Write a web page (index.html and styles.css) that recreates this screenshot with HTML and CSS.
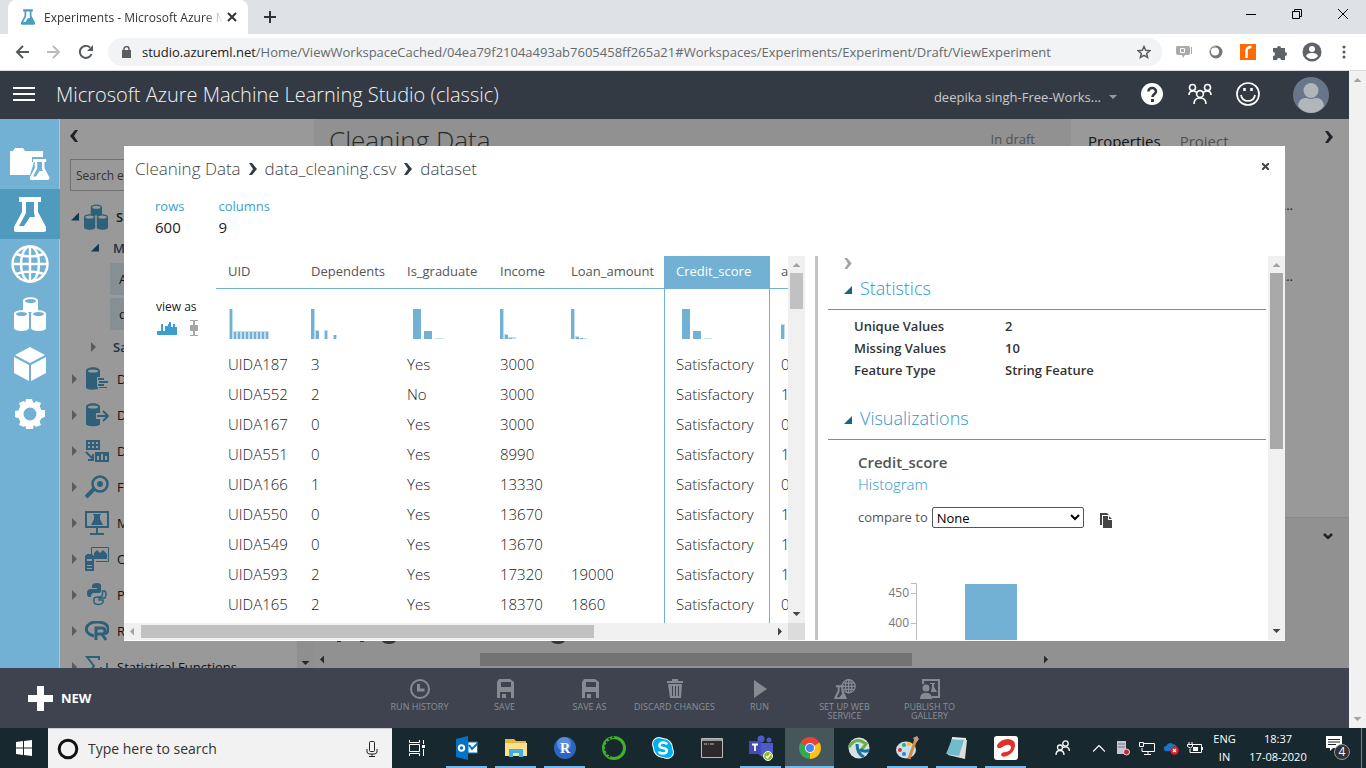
FILE: index.html
```html
<!DOCTYPE html>
<html lang="en">
<head>
<meta charset="utf-8">
<title>Experiments - Microsoft Azure Machine Learning Studio</title>
<link rel="stylesheet" href="styles.css">
</head>
<body>
<svg class="defs" aria-hidden="true">
  <symbol id="flask" viewBox="0 0 32 35"><path fill-rule="evenodd" d="M5 0h22v5h-3v10l8 15c1 3 0 5-3 5H3c-3 0-4-2-3-5l8-15V5H5zM12 5v11L5 29h5l6-9h5l-1-4V5z"/></symbol>
  <symbol id="cylinders" viewBox="0 0 32 34"><path d="M9 4c0-5 15-5 15 0v11H9zM0 17c0-5 15-5 15 0v14c0 4-15 4-15 0zM17 17c0-5 15-5 15 0v14c0 4-15 4-15 0z"/><g class="cut"><ellipse cx="16.500" cy="4" rx="5.500" ry="2"/><ellipse cx="7.500" cy="17" rx="5.500" ry="2"/><ellipse cx="24.500" cy="17" rx="5.500" ry="2"/></g></symbol>
  <symbol id="chev" viewBox="0 0 8 12"><path d="M0 0h3l5 6-5 6H0l4-6z"/></symbol>
  <symbol id="floppy" viewBox="0 0 18 20"><path fill-rule="evenodd" d="M3 0h11l4 3v16h-3v-6H4v6H1V3zM5 3v5h10V3zM6 15h4v4H6z"/></symbol>
</svg>

<header class="browser">
  <div class="tabstrip">
    <div class="tab">
      <svg class="fav" width="14" height="16"><use href="#flask"/></svg>
      <span class="tab-title">Experiments - Microsoft Azure Machine</span>
      <button class="plain" aria-label="Close tab"><svg width="10" height="10" viewBox="0 0 10 10"><path d="M1 1l8 8M9 1L1 9" stroke="#333" stroke-width="2"/></svg></button>
    </div>
    <button class="plain newtab" aria-label="New tab"><svg width="12" height="12" viewBox="0 0 12 12"><path d="M6 0v12M0 6h12" stroke="#333" stroke-width="2"/></svg></button>
    <div class="winctl">
      <button class="plain" aria-label="Minimize"><svg width="10" height="10" viewBox="0 0 10 10"><path d="M0 5.500h10" stroke="#000"/></svg></button>
      <button class="plain" aria-label="Restore"><svg width="10" height="10" viewBox="0 0 10 10" fill="none" stroke="#000"><path d="M.5 2.500h7v7h-7zM2.500 2.500v-2h7v7h-2"/></svg></button>
      <button class="plain" aria-label="Close"><svg width="10" height="10" viewBox="0 0 10 10"><path d="M0 0l10 10M10 0L0 10" stroke="#000"/></svg></button>
    </div>
  </div>
  <div class="toolbar">
    <button class="plain" aria-label="Back"><svg width="14" height="14" viewBox="0 0 14 14" fill="none" stroke="#555a5f" stroke-width="2"><path d="M14 7H2M8 1L2 7l6 6"/></svg></button>
    <button class="plain" aria-label="Forward"><svg width="14" height="14" viewBox="0 0 14 14" fill="none" stroke="#bbb" stroke-width="2"><path d="M0 7h12M6 1l6 6-6 6"/></svg></button>
    <button class="plain" aria-label="Reload"><svg width="14" height="14" viewBox="0 0 14 14"><path d="M12.500 9A6 6 0 1 1 11 2.500" fill="none" stroke="#555a5f" stroke-width="2"/><path d="M14 0v6H8z" fill="#555a5f"/></svg></button>
    <div class="omnibox">
      <svg width="9" height="12" viewBox="0 0 9 12"><path d="M0 4h9v8H0z" fill="#5a5e62"/><path d="M2 5V3a2.500 2.500 0 0 1 5 0v2" fill="none" stroke="#5a5e62" stroke-width="1.500"/></svg>
      <span class="url"><b>studio.azureml.net</b>/Home/ViewWorkspaceCached/04ea79f2104a493ab7605458ff265a21#Workspaces/Experiments/Experiment/Draft/ViewExperiment</span>
      <svg width="14" height="14" viewBox="0 0 14 14" fill="none" stroke="#5a5e62" stroke-width="1.500"><path d="M7 1.500l1.700 3.800 4.100.4-3.100 2.700.9 4.100L7 10.400l-3.600 2.100.9-4.100L1.200 5.700l4.100-.4z"/></svg>
    </div>
    <div class="exts">
      <button class="plain" aria-label="Capture"><svg width="16" height="14" viewBox="0 0 16 14"><path d="M1 1h11q2 0 2 2v5q0 2-2 2H9l-2 3-1-3H2q-2 0-2-2V3q0-2 1-2zM15 2h1v7h-1z" fill="#aaa"/><path d="M4.500 3.500h4v4h-4z" fill="none" stroke="#fff"/></svg></button>
      <button class="plain" aria-label="Ring"><svg width="14" height="14" viewBox="0 0 14 14"><circle cx="7" cy="7" r="6.500" fill="#777"/><circle cx="6" cy="6.500" r="4" fill="#fff"/><path d="M1 6a6 6 0 0 1 6-5" stroke="#bbb" fill="none"/></svg></button>
      <button class="plain" aria-label="Orange extension"><svg width="16" height="16" viewBox="0 0 16 16"><path d="M0 0h16v16H0z" fill="#ff6a00"/><path d="M6.500 14V7q0-4 5-4" fill="none" stroke="#fff" stroke-width="2.500"/></svg></button>
      <button class="plain" aria-label="Extensions"><svg width="16" height="16" viewBox="0 0 16 16"><path d="M1 4h4a2 2 0 1 1 4 0h4v4a2 2 0 1 1 0 4v4H9a2 2 0 0 0-4 0H1v-4a2 2 0 0 0 0-4z" fill="#5f6368"/></svg></button>
      <button class="plain" aria-label="Profile"><svg width="20" height="20" viewBox="0 0 20 20"><circle cx="10" cy="10" r="9.500" fill="#5f6368"/><circle cx="10" cy="7" r="3" fill="#fff"/><path d="M4 14q1-3 6-3t6 3q-2 3-6 3t-6-3" fill="#fff"/></svg></button>
      <button class="plain" aria-label="Menu"><svg width="4" height="14" viewBox="0 0 4 14" fill="#555"><circle cx="2" cy="2" r="1.500"/><circle cx="2" cy="7" r="1.500"/><circle cx="2" cy="12" r="1.500"/></svg></button>
    </div>
  </div>
</header>

<div class="viewport">
<div class="app">
  <header class="apphead">
    <button class="plain burger" aria-label="Menu"><svg width="22" height="14" viewBox="0 0 22 14"><path d="M0 1h22M0 7h22M0 13h22" stroke="#fff" stroke-width="2"/></svg></button>
    <h1>Microsoft Azure Machine Learning Studio (classic)</h1>
    <button class="plain user">deepika singh-Free-Works...<svg width="8" height="4" viewBox="0 0 8 4"><path d="M0 0h8L4 4z" fill="#999"/></svg></button>
    <button class="plain hicon" aria-label="Help"><svg width="22" height="22" viewBox="0 0 22 22"><circle cx="11" cy="11" r="11" fill="#fff"/><path d="M7.500 8.500c0-5 7.500-4.500 7.500 0 0 2.500-3.500 2.500-3.500 5.500" fill="none" stroke="#343a43" stroke-width="2.600"/><path d="M10 16h3v3h-3z" fill="#343a43"/></svg></button>
    <button class="plain hicon" aria-label="Community"><svg width="24" height="22" viewBox="0 0 24 22" fill="none" stroke="#fff" stroke-width="1.600"><circle cx="4.500" cy="4.500" r="3"/><circle cx="19.500" cy="4.500" r="3"/><circle cx="12" cy="11" r="3.400"/><path d="M1 12q0-4 4-4 3 0 4 2M23 12q0-4-4-4-3 0-4 2M6 21q0-6 6-6t6 6"/></svg></button>
    <button class="plain hicon" aria-label="Feedback"><svg width="24" height="24" viewBox="0 0 24 24" fill="none" stroke="#fff" stroke-width="1.700"><circle cx="12" cy="12" r="11"/><path d="M5 13q1 6 7 6t7-6"/><path d="M8.500 6v3M15.500 6v3" stroke-width="2.500"/></svg></button>
    <button class="plain avatar" aria-label="Account"><svg width="36" height="36" viewBox="0 0 36 36"><circle cx="18" cy="18" r="18" fill="#687689"/><circle cx="18" cy="13.500" r="7.500" fill="#b0b6bb"/><path d="M5 29q1-9 9-8 4 2 8 0 8-1 9 8-5 7-13 7T5 29" fill="#b0b6bb"/></svg></button>
  </header>

  <div class="work">
    <nav class="rail">
      <a href="#projects" aria-label="Projects"><svg width="40" height="32" viewBox="0 0 40 32"><path d="M0 3h3l2-3h8l2 3h18v6H22v5h2l-4 13H0z"/><g transform="translate(20 11) scale(.6)"><path fill-rule="evenodd" d="M5 0h22v5h-3v10l8 15c1 3 0 5-3 5H3c-3 0-4-2-3-5l8-15V5H5zM12 5v11L5 29h5l6-9h5l-1-4V5z"/></g></svg></a>
      <a href="#experiments" class="on" aria-label="Experiments"><svg width="32" height="35"><use href="#flask"/></svg></a>
      <a href="#web" aria-label="Web services"><svg width="38" height="38" viewBox="0 0 38 38" fill="none" stroke="#fff" stroke-width="2.400"><circle cx="19" cy="19" r="17.500"/><ellipse cx="19" cy="19" rx="9" ry="17.500"/><path d="M19 1v36M1 19h36M5 9q14 5 28 0M5 29q14-5 28 0"/></svg></a>
      <a href="#datasets" aria-label="Datasets"><svg width="32" height="34"><use href="#cylinders"/></svg></a>
      <a href="#models" aria-label="Models"><svg width="32" height="34" viewBox="0 0 32 34"><path d="M16 0l15 8-15 8L1 8zM0 10l15 8v16L0 26zM32 10l-15 8v16l15-8z"/></svg></a>
      <a href="#settings" aria-label="Settings"><svg width="30" height="30" viewBox="0 0 30 30"><g fill="#fff"><circle cx="15" cy="15" r="12"/><path d="M11 0h6l2 6h-9zM11 30h7l1-6h-9zM0 12v6l6 2v-9zM30 11v7l-6 2v-9zM4 4l5-2 4 5-6 5zM26 4l-5-2-4 5 6 5zM4 26l5 2 4-5-6-5zM26 26l-5 2-4-5 6-5z"/></g><circle cx="15" cy="15" r="6.500" fill="#72b1d3"/></svg></a>
    </nav>

    <div class="stage">
      <aside class="palette">
        <button class="plain fold" aria-label="Collapse"><svg width="8" height="12" class="flip"><use href="#chev"/></svg></button>
        <input class="search" type="search" aria-label="Search experiment items" placeholder="Search experiment items">
        <ul class="tree">
          <li class="open"><i class="tri"></i><svg width="24" height="26"><use href="#cylinders"/></svg>Saved Datasets</li>
          <li class="open sub"><i class="tri"></i>My Datasets</li>
          <li class="leaf">Airline Data</li>
          <li class="leaf">data_cleaning.csv</li>
          <li class="sub samples"><i class="tri"></i>Samples</li>
          <li><i class="tri"></i><svg width="24" height="24" viewBox="0 0 24 24"><path d="M1 4c0-5 14-5 14 0v6h-3v10h1v2q-12 2-12-2zM13 11h6v2h-6zM14 14h9v2h-9zM13 17h6v2h-6zM14 20h8v1h-8z"/><ellipse class="cut" cx="8" cy="4" rx="5" ry="1.500"/></svg>Data Format Conversions</li>
          <li><i class="tri"></i><svg width="24" height="24" viewBox="0 0 24 24"><path d="M1 4c0-5 14-5 14 0v6h-4v6h4v5c0 3-14 3-14 0z"/><ellipse class="cut" cx="8" cy="4" rx="5" ry="1.500"/><path d="M12 13h10M18 8l5 5-5 5" fill="none" stroke="#4da0ca" stroke-width="2"/></svg>Data Input and Output</li>
          <li><i class="tri"></i><svg width="24" height="24" viewBox="0 0 24 24"><path fill-rule="evenodd" d="M1 1h14v10H1zM3 3v2h2V3zM7 3v2h2V3zM11 3v2h2V3zM3 7v2h2V7zM7 7v2h2V7zM11 7v2h2V7zM10 13h14v10H10zM12 17v4h2v-4zM16 15v6h2v-6zM20 17v4h2v-4z"/><path d="M1 13l7 7M8 15v6H3" fill="none" stroke="#4da0ca" stroke-width="2"/></svg>Data Transformation</li>
          <li><i class="tri"></i><svg width="24" height="24" viewBox="0 0 24 24"><circle cx="15" cy="9" r="7.500" fill="none" stroke="#4da0ca" stroke-width="2.600"/><circle cx="15" cy="9" r="3"/><path d="M9 14L1 22" stroke="#4da0ca" stroke-width="4"/></svg>Feature Selection</li>
          <li><i class="tri"></i><svg width="24" height="24" viewBox="0 0 24 24"><path d="M1 1h22v15H1zM12 16v6M5 23h14" fill="none" stroke="#4da0ca" stroke-width="2"/><path d="M8 3h8v1h-1v4l3 6H6l3-6V4H8z"/></svg>Machine Learning</li>
          <li><i class="tri"></i><svg width="24" height="24" viewBox="0 0 24 24"><path d="M6.500 7V.5h17v14H11" fill="none" stroke="#4da0ca"/><path d="M9 12V6l3-3 3 3 3-3 4 4v5zM0 9l2-2h5l2 2v15H0zM2 12v2h5v-2zM2 18v1h5v-1zM2 21v1h5v-1z" fill-rule="evenodd"/></svg>OpenCV Library Modules</li>
          <li><i class="tri"></i><svg width="24" height="24" viewBox="0 0 24 24"><path d="M7 3q0-3 5-3t4 4v4q0 2-3 2H9q-3 0-3 4H4q-2 0-2-4t4-4h6V5H7z"/><path d="M17.500 8H20q2 3 0 7h-6v2h4q1 4-4 4.500-5 0-5-2.500v-3q0-2 4-2h3q2-1 1.500-6z" fill="none" stroke="#4da0ca" stroke-width="1.500"/></svg>Python Language Modules</li>
          <li><i class="tri"></i><svg width="24" height="20" viewBox="0 0 24 20"><path d="M9 15C-3 12 0 1 12 1s14 9 8 12" fill="none" stroke="#4da0ca" stroke-width="3"/><path d="M11 19V7h6q3 0 3 3t-3 3l4 6M11 13h6" fill="none" stroke="#4da0ca" stroke-width="3"/></svg>R Language Modules</li>
          <li><i class="tri"></i><svg width="24" height="24" viewBox="0 0 24 24"><path d="M14 5V2H2l7 9-7 9h12M16 12v8M22 8v12" fill="none" stroke="#4da0ca" stroke-width="2"/></svg>Statistical Functions</li>
        </ul>
        <div class="sideline"><i class="arr down dark"></i></div>
      </aside>
      <main class="canvas">
        <div class="canvas-head"><h2>Cleaning Data</h2><span>In draft</span></div>
        <svg class="hint" width="240" height="4" viewBox="0 0 240 4" fill="#555"><path d="M3 0h4v1H3zM26 0h4v1h-4zM48 0h14q-2 3-7 3t-7-3zM217 0h14q-2 3-7 3t-7-3z"/></svg>
        <div class="hbar"><i class="arr left dark"></i><i class="thumb"></i><i class="arr right dark"></i></div>
      </main>
      <aside class="props">
        <div class="ptabs"><b>Properties</b><span>Project</span><button class="plain" aria-label="Expand"><svg width="8" height="12"><use href="#chev"/></svg></button></div>
        <p>...</p><p>...</p>
        <div class="quick"><svg width="10" height="6" viewBox="0 0 10 6"><path d="M1 1l4 4 4-4" fill="none" stroke="#343a43" stroke-width="2.500"/></svg></div>
      </aside>
      <div class="shade"></div>

      <section class="modal" role="dialog" aria-label="dataset">
        <div class="crumbs">
          <a href="#exp">Cleaning Data</a><svg width="8" height="12"><use href="#chev"/></svg><a href="#csv">data_cleaning.csv</a><svg width="8" height="12"><use href="#chev"/></svg><span>dataset</span>
          <button class="plain" aria-label="Close"><svg width="7" height="7" viewBox="0 0 7 7"><path d="M0 0l7 7M7 0L0 7" stroke="#444" stroke-width="2"/></svg></button>
        </div>
        <dl class="counts"><div><dt>rows</dt><dd>600</dd></div><div><dt>columns</dt><dd>9</dd></div></dl>
        <div class="split">
          <div class="gridpane">
            <div class="viewas">view as
              <div><button class="plain" aria-label="Histogram"><svg width="20" height="13" viewBox="0 0 20 13"><path d="M0 13V9h4V2h2v7h2V4h3V2h1V0h2v5h2V2h2v3h2v8z" fill="#3c9fcd"/></svg></button><button class="plain" aria-label="Box plot"><svg width="8" height="16" viewBox="0 0 8 16"><path d="M0 0h8v1H5v4h3v6H5v4h3v1H0v-1h3v-4H0V5h3V1H0z" fill="#a6a6a6"/></svg></button></div>
            </div>
            <div class="tablewrap">
              <table>
                <colgroup><col class="w1"><col class="w2"><col class="w3"><col class="w4"><col class="w5"><col class="w6"><col class="w7"></colgroup>
                <thead>
                  <tr><th>UID</th><th>Dependents</th><th>Is_graduate</th><th>Income</th><th>Loan_amount</th><th class="sel">Credit_score</th><th>approval</th></tr>
                </thead>
                <tbody>
                  <tr class="mini">
                    <td><svg width="48" height="30"><path class="lt" d="M1 0h4v22h36v8H1z"/><path d="M2 0h2v30H2zM6 23h2v7H6zM10 23h2v7h-2zM14 23h2v7h-2zM18 23h2v7h-2zM22 23h2v7h-2zM26 23h2v7h-2zM30 23h2v7h-2zM34 23h2v7h-2zM38 23h2v7h-2z"/></svg></td>
                    <td><svg width="48" height="30"><path class="lt" d="M0 0h4v21h4v9H0zM13 21h4v9h-4zM22 26h4v4h-4z"/><path d="M0 0h3v30H0zM5 22h3v8H5zM14 22h2v8h-2zM23 26h2v4h-2z"/></svg></td>
                    <td><svg width="48" height="30"><path class="lt" d="M28 29h8v1h-8z"/><path d="M6 0h8v30H6zM17 22h8v8h-8z"/></svg></td>
                    <td><svg width="48" height="30"><path class="lt" d="M0 0h4v25h4v3h8v2H0z"/><path d="M0 0h3v30H0zM5 26h3v4H5zM9 29h3v1H9z"/></svg></td>
                    <td><svg width="48" height="30"><path class="lt" d="M0 0h4v27h4v2h8v1H0z"/><path d="M0 0h3v30H0zM5 28h3v2H5zM9 29h3v1H9z"/></svg></td>
                    <td class="sel"><svg width="48" height="30"><path class="lt" d="M28 29h8v1h-8z"/><path d="M6 0h8v30H6zM17 22h8v8h-8z"/></svg></td>
                    <td><svg width="8" height="30"><path class="lt" d="M0 15h4v15H0z"/><path d="M0 16h3v14H0z"/></svg></td>
                  </tr>
                  <tr><td>UIDA187</td><td>3</td><td>Yes</td><td>3000</td><td></td><td class="sel">Satisfactory</td><td>0</td></tr>
                  <tr><td>UIDA552</td><td>2</td><td>No</td><td>3000</td><td></td><td class="sel">Satisfactory</td><td>1</td></tr>
                  <tr><td>UIDA167</td><td>0</td><td>Yes</td><td>3000</td><td></td><td class="sel">Satisfactory</td><td>0</td></tr>
                  <tr><td>UIDA551</td><td>0</td><td>Yes</td><td>8990</td><td></td><td class="sel">Satisfactory</td><td>1</td></tr>
                  <tr><td>UIDA166</td><td>1</td><td>Yes</td><td>13330</td><td></td><td class="sel">Satisfactory</td><td>0</td></tr>
                  <tr><td>UIDA550</td><td>0</td><td>Yes</td><td>13670</td><td></td><td class="sel">Satisfactory</td><td>1</td></tr>
                  <tr><td>UIDA549</td><td>0</td><td>Yes</td><td>13670</td><td></td><td class="sel">Satisfactory</td><td>1</td></tr>
                  <tr><td>UIDA593</td><td>2</td><td>Yes</td><td>17320</td><td>19000</td><td class="sel">Satisfactory</td><td>1</td></tr>
                  <tr class="last"><td>UIDA165</td><td>2</td><td>Yes</td><td>18370</td><td>1860</td><td class="sel">Satisfactory</td><td>0</td></tr>
                </tbody>
              </table>
            </div>
            <div class="vsb"><i class="arr up"></i><i class="thumb short"></i><i class="arr down dark"></i></div>
            <div class="hsb"><i class="arr left"></i><i class="thumb"></i><i class="arr right dark"></i></div>
            <div class="corner"></div>
          </div>
          <div class="info">
            <div class="infobody">
              <button class="plain collapse" aria-label="Collapse panel"><svg width="8" height="11"><use href="#chev"/></svg></button>
              <h3><i class="tri"></i>Statistics</h3>
              <dl class="stats"><dt>Unique Values</dt><dd>2</dd><dt>Missing Values</dt><dd>10</dd><dt>Feature Type</dt><dd>String Feature</dd></dl>
              <h3><i class="tri"></i>Visualizations</h3>
              <div class="viz">
                <strong>Credit_score</strong>
                <span class="kind">Histogram</span>
                <div class="compare"><label for="cmp">compare to</label><select id="cmp"><option>None</option></select>
                  <button class="plain" aria-label="Copy"><svg width="12" height="15" viewBox="0 0 12 15"><path d="M0 0h7l2 2H2v10H0z" fill="#444"/><path d="M3 3h5v4h4v8H3zM9 3l3 3H9z" fill="#444"/></svg></button></div>
                <svg class="chart" width="180" height="60" viewBox="0 0 180 60"><path d="M53 .5h5.500V60M53 10.500h5M53 40.500h5" fill="none" stroke="#bbb"/><path d="M107 1h52v59h-52z" fill="#72b1d3"/><text x="51" y="14" text-anchor="end">450</text><text x="51" y="44" text-anchor="end">400</text></svg>
              </div>
            </div>
            <div class="vsb"><i class="arr up"></i><i class="thumb long"></i><i class="arr down dark"></i></div>
          </div>
        </div>
      </section>
    </div>
  </div>

  <footer class="actions">
    <button class="plain new"><svg width="25" height="25" viewBox="0 0 25 25"><path d="M9 0h7v9h9v7h-9v9H9v-9H0V9h9z" fill="#fff"/></svg>NEW</button>
    <div class="acts">
      <button class="plain"><svg width="20" height="20" viewBox="0 0 20 20" fill="none" stroke="#868b93" stroke-width="2"><circle cx="10" cy="10" r="9"/><path d="M8.500 5v6h6" stroke-width="3"/></svg>RUN HISTORY</button>
      <button class="plain"><svg width="18" height="20"><use href="#floppy"/></svg>SAVE</button>
      <button class="plain"><svg width="18" height="20"><use href="#floppy"/></svg>SAVE AS</button>
      <button class="plain"><svg width="16" height="20" viewBox="0 0 16 20"><path fill-rule="evenodd" d="M5 0h6v2h5v2H0V2h5zM1 5h14l-1 14H3zM5 7v10h1V7zM8 7v10h1V7zM11 7v10h1V7z"/></svg>DISCARD CHANGES</button>
      <button class="plain"><svg width="14" height="20" viewBox="0 0 14 20"><path d="M1 1l13 9-13 9z"/></svg>RUN</button>
      <button class="plain"><svg width="24" height="22" viewBox="0 0 24 22"><g fill="none" stroke="#868b93" stroke-width="1.400"><circle cx="16" cy="8" r="7.200"/><ellipse cx="16" cy="8" rx="3.500" ry="7.200"/><path d="M9 8h14M16 1v14M10 4.500h12M11 11.500h11"/></g><path fill-rule="evenodd" d="M2 7h9v2h-1v4l4 8q0 1-1 1H1q-1 0-1-1l4-8V9H2zM6 9v5l-3 6h3l3-4-1-2V9z"/></svg>SET UP WEB SERVICE</button>
      <button class="plain"><svg width="20" height="20" viewBox="0 0 20 20"><path d="M3 5V1h16v17h-7" fill="none" stroke="#868b93" stroke-width="2"/><circle cx="6" cy="9" r="3.500"/><path d="M0 20q0-5 4-6h4q4 1 4 6zM10 4h5v1h-1v3l3 5h-6l1-5V5h-2z"/></svg>PUBLISH TO GALLERY</button>
    </div>
  </footer>
</div>
<div class="vsb pagebar"><i class="arr up"></i><i class="arr down"></i></div>
</div>

<footer class="taskbar">
  <button class="plain start" aria-label="Start"><svg width="16" height="16" viewBox="0 0 16 16" fill="#fff"><path d="M0 2l7-1v6.500H0zM8 1l8-1v7.500H8zM0 8.500h7V15l-7-1zM8 8.500h8V16l-8-1z"/></svg></button>
  <label class="tsearch"><svg width="22" height="22" viewBox="0 0 22 22"><circle cx="11" cy="11" r="8.800" fill="none" stroke="#111" stroke-width="3"/></svg><input type="text" placeholder="Type here to search" aria-label="Type here to search"><svg width="12" height="16" viewBox="0 0 12 16" fill="none" stroke="#222"><rect x="3.500" y=".5" width="5" height="10" rx="1"/><path d="M1 8v3q0 2 3 2h4q3 0 3-2V8M6 13v3M3 15.500h6"/></svg></label>
  <button class="plain tview" aria-label="Task view"><svg width="16" height="16" viewBox="0 0 16 16" fill="none" stroke="#fff"><path d="M.5 4.500h10v7H.5zM.5 0v2.500h10V0M.5 16v-2.500h10V16M14.500 0v4M14.500 9v7"/><path d="M13 5h3v3h-3z" fill="#fff" stroke="none"/></svg></button>
  <div class="apps">
    <button class="plain run" aria-label="Outlook"><svg width="22" height="24" viewBox="0 0 22 24"><path d="M0 3l12-3v24L0 21z" fill="#0572c6"/><circle cx="5.500" cy="12" r="2.700" fill="none" stroke="#fff" stroke-width="2"/><path d="M12 6h9.500v11H12z" fill="#fff" stroke="#0572c6"/><path d="M13 9l3 4 6-6" fill="none" stroke="#0572c6" stroke-width="2"/></svg></button>
    <button class="plain run" aria-label="File Explorer"><svg width="22" height="20" viewBox="0 0 22 20"><path d="M0 1h9l2 2h10v15H0z" fill="#e8b63f"/><path d="M0 5h22v13H0z" fill="#fde08a"/><path d="M4 19v-8h14v8h-4v-4H8v4z" fill="#40aee8"/></svg></button>
    <button class="plain run" aria-label="R"><svg width="22" height="24" viewBox="0 0 22 24"><circle cx="11" cy="12" r="11" fill="#2c66c4"/><circle cx="10" cy="8" r="7" fill="#75a8ea" opacity=".6"/><text x="11" y="17" text-anchor="middle" fill="#fff" class="rr">R</text></svg></button>
    <button class="plain" aria-label="Anaconda"><svg width="24" height="26" viewBox="0 0 24 26"><circle cx="12" cy="13" r="10.500" fill="none" stroke="#43b02a" stroke-width="3"/><path d="M12 2a11 11 0 0 0-4 20" fill="none" stroke="#18282f" stroke-width="1.500" stroke-dasharray="2 2"/></svg></button>
    <button class="plain" aria-label="Skype"><svg width="22" height="24" viewBox="0 0 22 24"><circle cx="7" cy="8" r="7" fill="#fff"/><circle cx="15" cy="16" r="7" fill="#fff"/><circle cx="11" cy="12" r="10" fill="#fff"/><circle cx="7" cy="8" r="6" fill="#00aff0"/><circle cx="15" cy="16" r="6" fill="#00aff0"/><circle cx="11" cy="12" r="9" fill="#00aff0"/><path d="M15 8.500Q14 6.500 11 6.500T7.500 9 11 12t3.800 3-3.800 2.500T7 15.500" fill="none" stroke="#fff" stroke-width="2.500"/></svg></button>
    <button class="plain" aria-label="Command Prompt"><svg width="22" height="20" viewBox="0 0 22 20"><path d="M.5.5h21v19H.5z" fill="#2e2a2c" stroke="#bbb"/><path d="M1 1h20v2H1z" fill="#999"/><path d="M3 6h3M7 6h1M9 6h4" stroke="#bbb"/></svg></button>
    <button class="plain run" aria-label="Teams"><svg width="24" height="26" viewBox="0 0 24 26"><circle cx="12" cy="4" r="3.500" fill="#5059c9"/><circle cx="20" cy="5" r="2.500" fill="#5059c9"/><path d="M9 8h15v9q-2 5-8 5t-7-5z" fill="#5059c9"/><path d="M0 6h12v13H0z" fill="#434bb5"/><path d="M3 9.500h6M6 9v7" stroke="#fff" stroke-width="1.800"/><circle cx="19" cy="21" r="4.500" fill="#8cbd18" stroke="#fff"/><path d="M17 21l1.500 2 3-4" stroke="#fff" fill="none" stroke-width="1.300"/></svg></button>
    <button class="plain run cur" aria-label="Chrome"><svg width="22" height="24" viewBox="0 0 22 22"><path d="M11 11L1.500 5.500A11 11 0 0 1 20.500 5.500z" fill="#ea4335"/><path d="M11 11l9.500-5.500A11 11 0 0 1 11 22z" fill="#fbc116"/><path d="M11 11v11A11 11 0 0 1 1.500 5.500z" fill="#34a853"/><circle cx="11" cy="11" r="5" fill="#fff"/><circle cx="11" cy="11" r="4" fill="#4285f4"/></svg></button>
    <button class="plain" aria-label="AnyConnect"><svg width="22" height="24" viewBox="0 0 22 24"><circle cx="11" cy="12" r="10.500" fill="#d8e2e0"/><path d="M1 11Q6 3 13 5l5 3-6 8" fill="none" stroke="#6bb048" stroke-width="3"/><path d="M9 8q0 10 7 13M12 13q4 4 9 1" fill="none" stroke="#176fa5" stroke-width="3"/></svg></button>
    <button class="plain run" aria-label="Paint"><svg width="24" height="24" viewBox="0 0 24 24"><ellipse cx="10" cy="14" rx="10" ry="8.500" fill="#c9dff0"/><circle cx="4" cy="14" r="2" fill="#d33"/><circle cx="8" cy="9" r="2" fill="#2b5"/><circle cx="13" cy="8" r="2" fill="#fb2"/><circle cx="8" cy="18" r="2" fill="#3480d0"/><path d="M20 3l-7 20" stroke="#d9893a" stroke-width="3"/><path d="M17 2l4-2 2 3-3 4z" fill="#c98"/></svg></button>
    <button class="plain run" aria-label="Notepad"><svg width="22" height="24" viewBox="0 0 22 22"><path d="M6 1l15 2-2 19-17-4z" fill="#ddd"/><path d="M6 2l12 1-5 16L0 17z" fill="#6fbccb"/><path d="M6 1l14 1" stroke="#eee" stroke-width="2"/></svg></button>
    <button class="plain run" aria-label="Airtel"><svg width="24" height="24" viewBox="0 0 24 24"><rect width="24" height="24" rx="3" fill="#fff"/><path d="M3 9q4-6 11-6 8 1 7 7-1 7-8 10-5 2-6-1 0-3 5-3 5-1 5-5-1-4-7-1-4 3-6 2-1-1-1-3z" fill="#e0312d"/></svg></button>
  </div>
  <div class="tray">
    <button class="plain people" aria-label="People"><svg width="16" height="16" viewBox="0 0 16 16" fill="none" stroke="#fff" stroke-width="1.300"><circle cx="5" cy="7.500" r="2.500"/><path d="M1 15q0-4.500 4-4.500t4 4.500"/><circle cx="10.500" cy="3.500" r="2.700"/><path d="M8 7.500q6-2 6.500 3.500"/></svg></button>
    <button class="plain" aria-label="Hidden icons"><svg width="12" height="7" viewBox="0 0 12 7"><path d="M0 6.500l6-6 6 6" fill="none" stroke="#fff" stroke-width="1.200"/></svg></button>
    <button class="plain" aria-label="Device"><svg width="14" height="15" viewBox="0 0 14 15"><path d="M1 0h9v13H1z" fill="#c8c6d4"/><path d="M2 3h7M2 6h7" stroke="#778"/><circle cx="10.500" cy="11" r="3" fill="#c2283a" stroke="#ddd"/></svg></button>
    <button class="plain" aria-label="Network"><svg width="16" height="13" viewBox="0 0 16 13" fill="none" stroke="#fff"><path d="M5 1.500h10.500v8H3V6M.5.5h4v4h-4zM9 9.500v3M5 12.500h7"/></svg></button>
    <button class="plain" aria-label="OneDrive"><svg width="16" height="13" viewBox="0 0 16 13"><path d="M2 9q-3-4 1-5 3-5 7-2 4 1 4 4v3z" fill="#1079ce"/><circle cx="11.500" cy="8.500" r="4.300" fill="#d8202c"/><path d="M10 7l3 3M13 7l-3 3" stroke="#fff" stroke-width="1.300"/></svg></button>
    <button class="plain" aria-label="Battery"><svg width="16" height="12" viewBox="0 0 16 12" fill="none" stroke="#fff"><path d="M5 2.500h9.500v8H3V7M2 0v2M5 0v2M.5 2.500h5v2q-2 3-5 0zM15.500 5v3"/><path d="M6 5h5v4H6z" fill="#fff" stroke="none"/></svg></button>
    <div class="lang">ENG<br>IN</div>
    <div class="clock">18:37<br>17-08-2020</div>
    <button class="plain notes" aria-label="Notifications"><svg width="24" height="24" viewBox="0 0 24 24"><path d="M0 0h16v12H7l-3 3v-3H0z" fill="#fff"/><path d="M2 3.500h12M2 6h12M2 8.500h8" stroke="#18282f"/><circle cx="16" cy="16" r="7.500" fill="#2f3336" stroke="#999"/><text x="16" y="20" text-anchor="middle" fill="#fff">4</text></svg></button>
  </div>
</footer>
</body>
</html>
```
FILE: styles.css
```css
* { box-sizing: border-box; }
body { margin: 0; height: 100vh; display: flex; flex-direction: column; overflow: hidden; font-family: "Open Sans", "Noto Sans", sans-serif; font-size: 13px; color: #333; background: #fff; }
h1, h2, h3, p, dl, dd, ul { margin: 0; padding: 0; }
h1, h2, h3 { font-weight: 300; }
svg { display: block; flex: none; }
i { display: block; }
a { color: inherit; text-decoration: none; }
.defs { position: absolute; width: 0; height: 0; }
.cut { fill: var(--cut); }
.plain { display: flex; align-items: center; justify-content: center; padding: 0; border: 0; background: none; font: inherit; color: inherit; }

/* Browser frame */
.tabstrip { height: 34px; padding-left: 8px; display: flex; background: #dee1e6; }
.tab { width: 240px; padding: 0 11px 0 13px; display: flex; align-items: center; background: #fff; border-radius: 8px 8px 0 0; }
.fav { fill: #4a9cc0; }
.tab-title { flex: 1; margin: 0 4px 0 9px; overflow: hidden; white-space: nowrap; font-size: 12px; -webkit-mask-image: linear-gradient(90deg, #000 90%, transparent); mask-image: linear-gradient(90deg, #000 90%, transparent); }
.newtab { width: 44px; }
.winctl { margin-left: auto; margin-bottom: 6px; display: flex; }
.winctl .plain { width: 46px; }
.toolbar { height: 37px; padding: 0 6px; display: flex; align-items: center; border-bottom: 1px solid #d8dadd; }
.toolbar .plain { width: 32px; height: 32px; }
.omnibox { flex: 1; min-width: 0; height: 28px; margin: 0 6px; padding: 0 11px 0 14px; display: flex; align-items: center; border-radius: 14px; background: #f1f3f4; }
.url { flex: 1; margin-left: 11px; overflow: hidden; white-space: nowrap; font-size: 13px; color: #666a6e; }
.url b { font-weight: 400; color: #222; }
.exts { display: flex; }

/* Application shell */
.viewport { flex: 1; min-height: 0; display: flex; }
.app { flex: 1; min-width: 0; display: flex; flex-direction: column; }
.apphead { height: 48px; padding: 0 20px 2px 0; display: flex; align-items: center; background: #343a43; color: #fff; }
.burger { width: 48px; }
.apphead h1 { margin-left: 8px; font-size: 20px; white-space: nowrap; color: #f2f2f2; }
.user { margin-left: auto; margin-right: 11px; padding-top: 6px; gap: 8px; color: #c8cacd; }
.hicon { width: 48px; }
.avatar { margin-left: 21px; padding-top: 2px; }
.work { flex: 1; min-height: 0; display: flex; }
.rail { --cut: #72b1d3; width: 60px; padding-top: 20px; background: #72b1d3; border-right: 1px solid #a9c4d4; }
.rail a { height: 50px; display: flex; align-items: center; justify-content: center; fill: #fff; }
.rail .on { margin-right: -1px; background: #4f9bbd; }
.stage { flex: 1; min-width: 0; position: relative; display: flex; overflow: hidden; }
.shade { position: absolute; inset: 0; background: rgba(0, 0, 0, .4); }
.palette { --cut: #fff; width: 254px; position: relative; background: #fff; overflow: hidden; }
.fold { margin: 11px 10px 0; fill: #343a43; }
.flip { transform: scaleX(-1); }
.search { display: block; width: 225px; height: 32px; margin: 17px 10px 10px; padding: 0 5px; border: 1px solid #bbb; font: 12px "Open Sans", sans-serif; }
.search::placeholder { color: #555; opacity: 1; }
.tree { list-style: none; font-size: 13px; color: #222; white-space: nowrap; fill: #4da0ca; }
.tree li { height: 36px; padding-left: 12px; display: flex; align-items: center; }
.tree li svg { margin-right: 8px; }
.tree .tri { width: 5px; height: 10px; margin-right: 8px; background: #999; clip-path: polygon(0 0, 100% 50%, 0 100%); }
.tree .open { height: 31px; color: #234; font-weight: 600; }
.tree .open .tri, .info .tri { width: 8px; height: 8px; margin-right: 5px; background: #1b6387; clip-path: polygon(100% 0, 100% 100%, 0 100%); }
.tree .open:not(.sub) { padding-left: 11px; }
.tree .sub { padding-left: 31px; color: #357; }
.tree .open.sub .tri { margin-right: 14px; }
.tree .sub.samples { height: 28px; font-weight: 600; }
.tree .samples .tri { margin-right: 17px; }
.tree .leaf { height: 32px; margin: 0 20px 3px 50px; padding-left: 9px; background: #dfeef6; }
.sideline { position: absolute; right: 0; top: 76px; bottom: 0; width: 17px; padding-bottom: 3px; display: flex; flex-direction: column; justify-content: flex-end; align-items: center; background: #eee; }
.canvas { flex: 1; min-width: 0; display: flex; flex-direction: column; background: #f2f2f2; }
.canvas-head { display: flex; justify-content: space-between; padding: 4px 36px 0 15px; color: #999; }
.canvas-head h2 { font-size: 26px; line-height: 34px; color: #444; }
.canvas-head span { line-height: 32px; color: #888; }
.hint { margin: auto 0 7px 20px; }
.hbar { height: 15px; margin-bottom: 1px; padding: 0 23px 0 6px; display: flex; align-items: center; }
.hbar .thumb { flex: 0 0 432px; margin: 0 auto 0 156px; height: 13px; background: #bfbfbf; }
.props { width: 278px; display: flex; flex-direction: column; background: #fff; }
.ptabs { height: 55px; padding: 8px 16px 0 17px; display: flex; align-items: flex-start; font-size: 15px; line-height: 28px; color: #888; fill: #343a43; }
.ptabs b { font-weight: 400; color: #222; margin-right: 19px; }
.ptabs .plain { margin: 4px 0 0 auto; }
.props p { height: 71px; padding-right: 56px; padding-top: 22px; text-align: right; }
.quick { margin-top: auto; height: 151px; padding: 15px 16px 0; display: flex; justify-content: flex-end; background: #f2f2f2; border-top: 1px solid #e4e4e4; }

/* Scrollbars */
.arr { width: 8px; height: 8px; flex: none; background: #a3a3a3; }
.arr.dark { background: #444; }
.arr.up { height: 4px; clip-path: polygon(50% 0, 100% 100%, 0 100%); }
.arr.down { height: 4px; clip-path: polygon(0 0, 100% 0, 50% 100%); }
.arr.left { width: 4px; clip-path: polygon(0 50%, 100% 0, 100% 100%); }
.arr.right { width: 4px; clip-path: polygon(0 0, 100% 50%, 0 100%); }
.vsb { width: 17px; padding: 7px 0; display: flex; flex-direction: column; align-items: center; background: #f0f0f0; }
.vsb .arr:last-child { margin-top: auto; }
.vsb .thumb { width: 13px; margin-top: 6px; background: #c1c1c1; }
.vsb .short { height: 36px; }
.vsb .long { height: 176px; background: #a8a8a8; }
.pagebar { background: #f1f1f1; }

/* Dataset dialog */
.modal { position: absolute; inset: 27px 64px; padding-bottom: 1px; display: flex; flex-direction: column; background: #fff; }
.crumbs { height: 46px; padding: 0 16px 2px 11px; display: flex; align-items: center; gap: 8px; font-size: 17px; font-weight: 300; color: #444; fill: #343a43; }
.crumbs svg { margin-top: 2px; }
.crumbs .plain { margin: 0 0 6px auto; }
.counts { display: flex; gap: 34px; margin: 3px 31px 17px; }
.counts dt { line-height: 22px; color: #3c9fcd; }
.counts dd { margin-bottom: 2px; line-height: 20px; font-size: 15px; color: #222; }
.split { flex: 1; min-height: 0; display: grid; grid-template-columns: 681fr 480fr; grid-template-rows: minmax(0, 1fr); }
.gridpane { min-width: 0; display: grid; grid-template: minmax(0, 1fr) 17px / 92px minmax(0, 1fr) 17px; }
.viewas { padding: 41px 0 0 32px; font-size: 12px; line-height: 20px; color: #222; }
.viewas div { display: flex; gap: 13px; margin: 3px 0 0 1px; }
.tablewrap { overflow: hidden; }
table { width: 655px; table-layout: fixed; border-collapse: separate; border-spacing: 0; font-weight: 300; font-size: 15px; color: #222; }
.w1 { width: 83px; } .w2 { width: 96px; } .w3 { width: 93px; } .w4 { width: 71px; } .w5 { width: 105px; } .w6 { width: 106px; } .w7 { width: 101px; }
th { height: 33px; padding: 0 0 2px 12px; text-align: left; font-size: 13px; font-weight: 400; color: #555; border-bottom: 1px solid #72b1d3; }
td { height: 30px; padding: 0 0 2px 12px; line-height: 20px; white-space: nowrap; }
td.sel, th.sel { padding-left: 11px; border-left: 1px solid #72b1d3; border-right: 1px solid #72b1d3; }
td:last-child, th:last-child { padding-left: 11px; }
th.sel { background: #72b1d3; color: #fff; }
.mini td { height: 61px; padding-top: 20px; padding-bottom: 11px; }
.last td { height: 40px; padding-top: 4px; vertical-align: top; }
.mini svg { fill: #72b1d3; }
.mini .lt { fill: #c3def0; }
.hsb { grid-column: 1 / 3; padding: 0 6px; display: flex; align-items: center; background: #f0f0f0; }
.hsb .thumb { width: 453px; height: 13px; margin: 0 auto 0 7px; background: #c1c1c1; }
.corner { background: #dcdcdc; }
.info { margin-left: 10px; min-width: 0; display: flex; border-left: 3px solid #c3c3c3; }
.infobody { flex: 1; min-width: 0; padding: 2px 2px 0 10px; overflow: hidden; }
.collapse { margin-left: 16px; fill: #a0a4aa; }
.info h3 { height: 41px; padding: 0 0 2px 16px; display: flex; align-items: center; font-size: 18px; color: #2f96c7; border-bottom: 1px solid #4b9fc2; }
.info .tri { margin: 4px 8px 0 0; }
.stats { display: grid; grid-template-columns: 151px 1fr; margin: 5px 26px 18px; line-height: 22px; font-weight: 600; }
.viz { display: flex; flex-direction: column; padding: 11px 0 0 30px; line-height: 22px; font-size: 15px; }
.viz strong { font-weight: 600; color: #555; }
.kind { font-weight: 300; color: #2f96c7; }
.compare { display: flex; align-items: center; margin-top: 11px; font-size: 13px; color: #555; }
.compare select { width: 152px; height: 21px; margin: 0 16px 0 4px; padding: 0; font: 13px "Open Sans", sans-serif; color: #000; background: #fff; border: 1px solid #555; border-radius: 2px; }
.compare .plain { margin-top: 6px; }
.chart { margin-top: 55px; font-size: 12px; fill: #777; }

/* Command bar */
.actions { height: 60px; display: flex; background: #3e434f; color: #8a8f97; }
.new { width: 377px; padding-left: 28px; gap: 8px; justify-content: flex-start; color: #fff; font-weight: 700; }
.acts { display: flex; }
.acts .plain { width: 85px; padding: 11px 12px 0; flex-direction: column; justify-content: flex-start; gap: 3px; font-size: 9px; line-height: 9px; white-space: nowrap; fill: #868b93; }
.acts .plain:nth-child(n+6) { white-space: normal; }
.acts svg { height: 20px; }

/* Taskbar */
.taskbar { height: 40px; display: flex; background: #18282f; color: #fff; }
.start { width: 48px; }
.tsearch { width: 344px; padding: 0 14px 0 9px; display: flex; align-items: center; background: #f2f2f2; border-top: 1px solid #ccc; }
.tsearch input { flex: 1; margin-left: 9px; padding: 0; border: 0; background: none; font: 14px "Open Sans", sans-serif; }
.tsearch input::placeholder { color: #333; opacity: 1; }
.tview { width: 50px; }
.apps { display: flex; }
.apps .plain { width: 41px; margin: 0 4px; }
.apps .run { background: linear-gradient(#76b9ed, #76b9ed) bottom / 100% 2px no-repeat; }
.apps .cur { width: 49px; margin: 0; background-color: #46575c; }
.rr { font: bold 14px "Liberation Serif", serif; }
.tray { margin-left: auto; padding-right: 4px; display: flex; }
.tray .plain { width: 24px; }
.tray .people { width: 48px; }
.lang { width: 35px; }
.clock { width: 72px; }
.lang, .clock { padding-top: 2px; text-align: center; font-size: 11px; line-height: 18px; white-space: nowrap; }
.tray .notes { width: 48px; border-right: 1px solid #77838a; font-size: 12px; }
```
